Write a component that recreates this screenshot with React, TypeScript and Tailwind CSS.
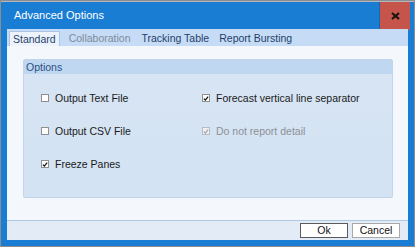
import React from 'react';

const font = { fontFamily: '"Liberation Sans", Arial, sans-serif' };

const Check: React.FC<{ checked?: boolean; disabled?: boolean }> = ({ checked, disabled }) => (
  <span
    className={`w-[8px] h-[8px] flex items-center justify-center border ${disabled ? 'border-[#b8bcc2] bg-[#eef0f3]' : 'border-[#8e8f8f] bg-white'}`}
  >
    {checked && (
      <svg width="7" height="7" viewBox="0 0 7 7">
        <path d="M1 3.6 L2.8 5.4 L6 1.3" fill="none" stroke={disabled ? '#a0a4a8' : '#111'} strokeWidth="1.5" />
      </svg>
    )}
  </span>
);

const Option: React.FC<{ label: string; checked?: boolean; disabled?: boolean }> = ({ label, checked, disabled }) => (
  <div className="flex items-center gap-[6px] h-[14px]">
    <Check checked={checked} disabled={disabled} />
    <span className={`text-[10.5px] leading-none ${disabled ? 'text-[#8c9096]' : 'text-[#1a1a1a]'}`}>{label}</span>
  </div>
);

const App: React.FC = () => {
  const tabs = [
    { name: 'Standard', active: true },
    { name: 'Collaboration', muted: true },
    { name: 'Tracking Table' },
    { name: 'Report Bursting' },
  ];

  return (
    <div className="w-[415px] h-[247px] bg-[#8a8d91] p-px" style={font}>
      <div className="h-full flex flex-col bg-[#1a7dd4] border-t border-[#b4b8bd]">
        {/* Title bar */}
        <div className="h-[27px] flex items-stretch shrink-0">
          <div className="flex-1 pl-[13px] pt-[8px] text-[11px] leading-none text-white">Advanced Options</div>
          <button className="w-[31px] h-[28px] mr-[4px] bg-[#c5554b] border-l border-[#1565b5] flex items-center justify-center">
            <svg width="9" height="8" viewBox="0 0 9 8">
              <path d="M1 1 L8 7 M8 1 L1 7" stroke="#111" strokeWidth="2" />
            </svg>
          </button>
        </div>

        {/* Body */}
        <div className="flex-1 mx-[6px] mb-[6px] flex flex-col bg-[#f4f7fb]">
          {/* Tabs */}
          <div className="h-[17px] bg-[#c6dcf6] flex items-end pl-[2px] shrink-0">
            {tabs.map(t => (
              <div
                key={t.name}
                className={`h-[15px] flex items-center text-[10.5px] leading-none ${
                  t.active
                    ? 'bg-[#eef3fb] border-t border-l border-r border-[#aac6e6] px-[3px] text-[#1f3f6b]'
                    : t.muted
                    ? 'pl-[9px] pr-[6px] text-[#7e8a98]'
                    : 'px-[5px] text-[#1f3f6b]'
                }`}
              >
                {t.name}
              </div>
            ))}
          </div>

          {/* Content */}
          <div className="flex-1 pt-[13px] pl-[16px] pr-[15px]">
            <div className="h-[139px] flex flex-col rounded-[2px] border border-[#c2d4e8] bg-gradient-to-b from-[#d7e4f3] to-[#d3e3f3]">
              <div className="h-[14px] bg-[#bfd7f0] pl-[2px] flex items-center text-[10.5px] leading-none text-[#2d4f86]">Options</div>
              <div className="grid grid-cols-[161px_1fr] gap-y-[19px] pl-[17px] pt-[17px]">
                <Option label="Output Text File" />
                <Option label="Forecast vertical line separator" checked />
                <Option label="Output CSV File" />
                <Option label="Do not report detail" checked disabled />
                <Option label="Freeze Panes" checked />
              </div>
            </div>
          </div>

          {/* Footer */}
          <div className="h-[20px] bg-[#e3ebf6] border-t border-[#aec8e6] flex items-center justify-end gap-[4px] pr-[8px] shrink-0">
            <button className="w-[48px] h-[15px] bg-white border border-[#5a5a5a] text-[10.5px] leading-none text-[#111]">Ok</button>
            <button className="w-[48px] h-[15px] bg-white border border-[#a9a9a9] text-[10.5px] leading-none text-[#111]">Cancel</button>
          </div>
        </div>
      </div>
    </div>
  );
};

export default App;
